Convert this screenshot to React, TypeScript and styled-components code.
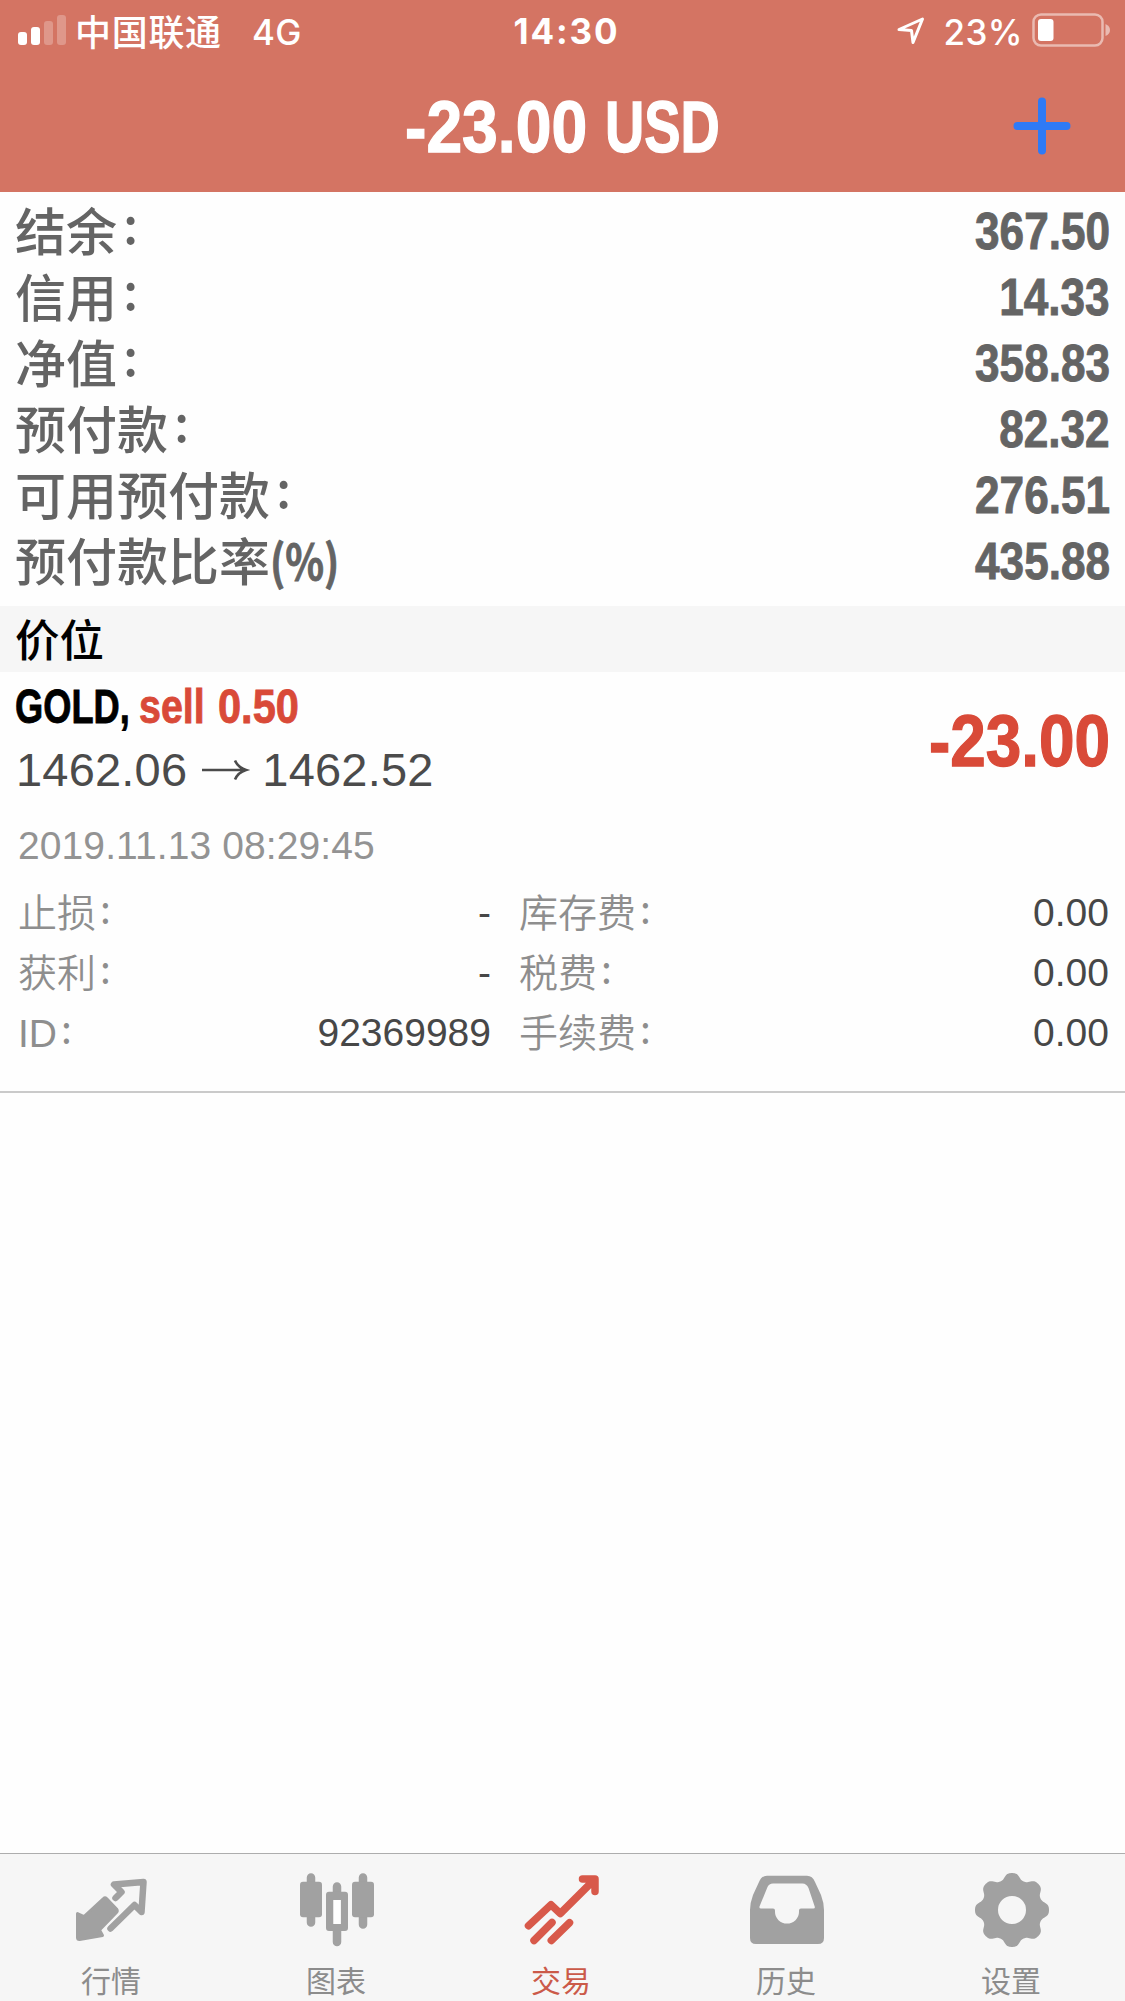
import React from "react";
import styled, { createGlobalStyle } from "styled-components";

const sans = `"Liberation Sans", "Noto Sans CJK SC", sans-serif`;
const cjk = `"Noto Sans CJK SC", sans-serif`;
const ui = `Inter, "Noto Sans CJK SC", sans-serif`;

const GlobalStyle = createGlobalStyle`
  * { box-sizing: border-box; }
  body { margin: 0; background: #fefefe; }
`;

const Screen = styled.div`
  width: 1125px;
  height: 2001px;
  display: flex;
  flex-direction: column;
  overflow: hidden;
  background: #fefefe;
  font-family: ${sans};
  white-space: nowrap;
`;

const Header = styled.header`
  height: 192px;
  flex: none;
  background: #d47463;
  color: #fff;
`;

const StatusBar = styled.div`
  height: 60px;
  padding: 0 15px 0 18px;
  display: grid;
  grid-template-columns: 1fr auto 1fr;
  font-family: ${ui};
`;

const StatusGroup = styled.div<{ $end?: boolean }>`
  display: flex;
  align-items: flex-start;
  justify-content: ${(p) => (p.$end ? "flex-end" : "flex-start")};
`;

const Carrier = styled.span`
  margin: 4px 0 0 9px;
  width: 177px;
  font: 500 36px/52px ${cjk};
  letter-spacing: 0.7px;
`;

const StatusText = styled.span<{ $left?: number }>`
  margin: 6px 0 0 ${(p) => p.$left ?? 0}px;
  font: 500 35px/52px ${ui};
  letter-spacing: 0.4px;
`;

const Clock = styled.span`
  margin-top: 5px;
  padding-left: 5px;
  font: 700 35px/52px ${ui};
  letter-spacing: 1.9px;
`;

const Glyph = styled.svg<{ $top?: number; $left?: number }>`
  display: block;
  flex: none;
  overflow: visible;
  margin: ${(p) => p.$top ?? 0}px 0 0 ${(p) => p.$left ?? 0}px;
`;

const TitleBar = styled.div`
  height: 132px;
  padding: 0 53px;
  display: grid;
  grid-template-columns: 1fr auto 1fr;
`;

const Title = styled.h1`
  grid-column: 2;
  margin: 25px 0 0;
  display: flex;
  gap: 16px;
  font: 700 73px/84px ${sans};
`;

const AddButton = styled.button`
  justify-self: end;
  align-self: start;
  margin-top: 36px;
  padding: 0;
  border: 0;
  background: none;
`;

const CondensedBox = styled.span<{ $width: number; $end?: boolean }>`
  display: flex;
  justify-content: ${(p) => (p.$end ? "flex-end" : "flex-start")};
  width: ${(p) => p.$width}px;
`;

const CondensedText = styled.span<{ $scale: number; $end?: boolean }>`
  flex: none;
  transform: scaleX(${(p) => p.$scale});
  transform-origin: ${(p) => (p.$end ? "right" : "left")} center;
  -webkit-text-stroke: 0.018em currentColor;
`;

type CondensedProps = { width: number; scale?: number; end?: boolean; children: React.ReactNode };

const Condensed = ({ width, scale = 0.865, end, children }: CondensedProps) => (
  <CondensedBox $width={width} $end={end}>
    <CondensedText $scale={scale} $end={end}>{children}</CondensedText>
  </CondensedBox>
);

const Summary = styled.dl`
  margin: 0;
  padding: 6px 15px 0 15px;
  height: 414px;
  flex: none;
  color: #646464;
`;

const SummaryRow = styled.div`
  height: 66px;
  display: flex;
  justify-content: space-between;
`;

const SummaryLabel = styled.dt`
  display: flex;
  align-items: flex-start;
  font: 500 51px/63px ${cjk};
`;

const SummaryValue = styled.dd`
  margin: 0;
  font: 700 51px/68px ${sans};
`;

const SummaryColon = styled.span`
  margin-left: 6px;
  font-weight: 500;
  line-height: 49px;
`;

const Unit = styled.span`
  font: 700 48px/63px ${cjk};
`;

const SectionTitle = styled.h2`
  margin: 0;
  height: 66px;
  flex: none;
  padding-left: 15px;
  background: #f6f6f6;
  color: #000;
  font: 500 44.5px/64px ${cjk};
`;

const Position = styled.section`
  height: 421px;
  flex: none;
  padding: 0 15px;
  border-bottom: 2px solid #cacaca;
`;

const PositionTop = styled.div`
  height: 136px;
  display: flex;
  justify-content: space-between;
`;

const Symbol = styled.div`
  display: flex;
  padding-top: 6px;
  font: 700 48px/58px ${sans};
  color: #000;
`;

const Side = styled.span`
  margin-left: 9px;
  display: flex;
  gap: 15px;
  color: #d94a38;
`;

const Prices = styled.div`
  margin-top: 5px;
  padding-left: 1px;
  display: flex;
  gap: 14px;
  font: 400 47px/58px ${sans};
  letter-spacing: 0.2px;
  color: #4b4b4b;
`;

const Profit = styled.div`
  padding-top: 27px;
  font: 700 73px/84px ${sans};
  color: #d94a38;
`;

const OpenTime = styled.div`
  padding: 16px 0 0 3px;
  height: 75px;
  font: 400 39px/44px ${sans};
  letter-spacing: 0.1px;
  color: #939393;
`;

const Details = styled.div`
  display: grid;
  grid-template-columns: 473px 590px;
  column-gap: 28px;
  grid-auto-rows: 60px;
  padding-left: 3px;
`;

const Detail = styled.div`
  display: flex;
  justify-content: space-between;
  align-items: flex-start;
`;

const DetailLabel = styled.span`
  display: flex;
  align-items: flex-start;
  font: 350 39px/61px "Liberation Sans", ${cjk};
  color: #8e8e8e;
`;

const DetailColon = styled.span`
  margin-left: 4px;
  font: 400 39px/48px ${cjk};
`;

const DetailValue = styled.span`
  font: 400 39px/60px ${sans};
  color: #474747;
`;

const Spacer = styled.div`
  flex: 1;
`;

const TabBar = styled.nav`
  height: 148px;
  flex: none;
  display: grid;
  grid-template-columns: repeat(5, 225px);
  border-top: 1px solid #adadad;
  background: #f6f6f6;
`;

const Tab = styled.a<{ $active?: boolean }>`
  display: flex;
  flex-direction: column;
  align-items: center;
  padding: 19px 3px 0 0;
  color: ${(p) => (p.$active ? "#d8594a" : "#a1a1a1")};
`;

const TabLabel = styled.span<{ $active?: boolean }>`
  margin-top: 8px;
  font: 400 30px/44px ${cjk};
  color: ${(p) => (p.$active ? "#cb5a49" : "#8c8c8c")};
`;

const summary: { label: string; unit?: string; value: string }[] = [
  { label: "结余", value: "367.50" },
  { label: "信用", value: "14.33" },
  { label: "净值", value: "358.83" },
  { label: "预付款", value: "82.32" },
  { label: "可用预付款", value: "276.51" },
  { label: "预付款比率", unit: "(%)", value: "435.88" },
];

const details: [string, string][] = [
  ["止损", "-"],
  ["库存费", "0.00"],
  ["获利", "-"],
  ["税费", "0.00"],
  ["ID", "92369989"],
  ["手续费", "0.00"],
];

const gearPath = (() => {
  const points: string[] = [];
  for (let i = 0; i < 240; i++) {
    const a = (i / 240) * Math.PI * 2;
    const r = 33.6 + 3.8 * Math.tanh(1.2 * (Math.cos(8 * a) + 0.2));
    points.push(`${(39 + r * Math.cos(a)).toFixed(2)} ${(37 + r * Math.sin(a)).toFixed(2)}`);
  }
  return `M${points.join("L")}ZM39 23a14 14 0 1 0 0 28a14 14 0 1 0 0-28Z`;
})();

/* Every tab icon is drawn on a 76 x 76 grid. */
const tabs: { label: string; active?: boolean; icon: React.ReactNode }[] = [
  {
    label: "行情",
    icon: (
      <>
        <path
          d="M4.500 40.500L11 43.500L30.500 25.500Q32 24 33.500 25.500L43.500 36Q45 38 43.500 39.500L26.500 57L29.500 62.500L6.500 66.500Q4.500 66.500 4.500 64.500Z"
          fill="currentColor" stroke="currentColor" strokeWidth="3" strokeLinejoin="round"
        />
        <path
          d="M42.500 25L48.500 19L41 11.500L70.500 9L68.500 39L61.500 32L37.500 55.500"
          fill="none" stroke="currentColor" strokeWidth="6.500" strokeLinecap="round" strokeLinejoin="round"
        />
      </>
    ),
  },
  {
    label: "图表",
    icon: (
      <>
        <path
          d="M13 4.500V49.500M39 13.500V22M39 56V69M65 4.500V51.500"
          stroke="currentColor" strokeWidth="8.500" strokeLinecap="round"
        />
        <rect x="2" y="8.700" width="22" height="35.500" rx="3" fill="currentColor" />
        <rect x="54" y="8.700" width="22" height="35.500" rx="3" fill="currentColor" />
        <path
          d="M31 18.700H47Q50 18.700 50 21.700V55Q50 58 47 58H31Q28 58 28 55V21.700Q28 18.700 31 18.700ZM35.500 27V51H42.700V27Z"
          fill="currentColor" fillRule="evenodd"
        />
        <path d="M35.500 27H42.700V51H35.500Z" fill="#fefefe" />
      </>
    ),
  },
  {
    label: "交易",
    active: true,
    icon: (
      <>
        <path
          d="M5.500 52.700L28 31.800L37.300 40.500L71 7M59.500 6H72V18.500M11 67.500L29 49.500M28.300 67.500L46.500 49.700"
          fill="none" stroke="currentColor" strokeWidth="7.500" strokeLinecap="round" strokeLinejoin="round"
        />
        <path d="M62 8H70V16Z" fill="currentColor" />
      </>
    ),
  },
  {
    label: "历史",
    icon: (
      <path
        fillRule="evenodd" fill="currentColor"
        d="M2 37Q2 30 5 22L11 9Q13.500 2.700 19 2.700H59Q64.500 2.700 67 9L73 22Q76 30 76 37V65Q76 71 70 71H8Q2 71 2 65ZM25 10.500Q21 10.500 19.500 14L11.500 33.500Q11 35.500 13 35.500H25Q27 35.500 27 37.500V39A12 11.500 0 0 0 51 39V37.500Q51 35.500 53 35.500H65.500Q67.300 35.500 66.700 33.500L60.500 15Q58.500 10.500 54.500 10.500Z"
      />
    ),
  },
  {
    label: "设置",
    icon: <path d={gearPath} fill="currentColor" fillRule="evenodd" />,
  },
];

const SignalIcon = () => (
  <Glyph $top={14} width="48" height="32" viewBox="0 0 48 32" fill="#fff">
    <rect x="0" y="18" width="9" height="13" rx="3" />
    <rect x="13" y="13" width="9" height="18" rx="3" />
    <rect x="26" y="7" width="9" height="24" rx="3" opacity="0.25" />
    <rect x="39" y="1" width="9" height="30" rx="3" opacity="0.25" />
  </Glyph>
);

const LocationIcon = () => (
  <Glyph $top={15} width="30" height="31" viewBox="0 0 30 31">
    <path
      d="M3 14.500L26.500 4L17 27.500L15.500 15.500Z"
      fill="none" stroke="#fff" strokeWidth="3" strokeLinejoin="round"
    />
  </Glyph>
);

const BatteryIcon = () => (
  <Glyph $top={12} $left={7} width="80" height="36" viewBox="0 0 80 36">
    <rect x="3.500" y="2.500" width="69" height="31" rx="7.500" fill="none" stroke="#fff" strokeOpacity="0.5" strokeWidth="2.500" />
    <rect x="8" y="7" width="15.500" height="22" rx="3" fill="#fff" />
    <path d="M75.500 12Q80 14 80 18T75.500 24Z" fill="#fff" opacity="0.5" />
  </Glyph>
);

export default function App() {
  return (
    <Screen>
      <GlobalStyle />
      <Header>
        <StatusBar>
          <StatusGroup>
            <SignalIcon />
            <Carrier>中国联通</Carrier>
            <StatusText>4G</StatusText>
          </StatusGroup>
          <Clock>14:30</Clock>
          <StatusGroup $end>
            <LocationIcon />
            <StatusText $left={18}>23%</StatusText>
            <BatteryIcon />
          </StatusGroup>
        </StatusBar>
        <TitleBar>
          <Title>
            <Condensed width={184} scale={0.88}>-23.00</Condensed>
            <Condensed width={115} scale={0.745}>USD</Condensed>
          </Title>
          <AddButton aria-label="Add">
            <Glyph width="60" height="60" viewBox="0 0 60 60">
              <path d="M30 5.500V54.500M5.500 30H54.500" stroke="#2f7af5" strokeWidth="8" strokeLinecap="round" />
            </Glyph>
          </AddButton>
        </TitleBar>
      </Header>
      <Summary>
        {summary.map(({ label, unit, value }) => (
          <SummaryRow key={label}>
            <SummaryLabel>
              {label}
              {unit ? (
                <Unit>
                  <Condensed width={68} scale={0.84}>{unit}</Condensed>
                </Unit>
              ) : (
                <SummaryColon>:</SummaryColon>
              )}
            </SummaryLabel>
            <SummaryValue>
              <Condensed width={140} end>{value}</Condensed>
            </SummaryValue>
          </SummaryRow>
        ))}
      </Summary>
      <SectionTitle>价位</SectionTitle>
      <Position>
        <PositionTop>
          <div>
            <Symbol>
              <Condensed width={115} scale={0.755}>GOLD,</Condensed>
              <Side>
                <Condensed width={64} scale={0.82}>sell</Condensed>
                <Condensed width={84}>0.50</Condensed>
              </Side>
            </Symbol>
            <Prices>
              <span>1462.06</span>
              <Glyph $top={17} width="47" height="24" viewBox="0 0 47 24">
                <path d="M1 12H44M34 2.500Q37 9.500 45 12Q37 14.500 34 21.500" fill="none" stroke="#4b4b4b" strokeWidth="2.600" />
              </Glyph>
              <span>1462.52</span>
            </Prices>
          </div>
          <Profit>
            <Condensed width={200} scale={0.875} end>-23.00</Condensed>
          </Profit>
        </PositionTop>
        <OpenTime>2019.11.13 08:29:45</OpenTime>
        <Details>
          {details.map(([label, value]) => (
            <Detail key={label}>
              <DetailLabel>
                {label}
                <DetailColon>:</DetailColon>
              </DetailLabel>
              <DetailValue>{value}</DetailValue>
            </Detail>
          ))}
        </Details>
      </Position>
      <Spacer />
      <TabBar>
        {tabs.map((tab) => (
          <Tab key={tab.label} $active={tab.active}>
            <Glyph width="76" height="76" viewBox="0 0 76 76">{tab.icon}</Glyph>
            <TabLabel $active={tab.active}>{tab.label}</TabLabel>
          </Tab>
        ))}
      </TabBar>
    </Screen>
  );
}
